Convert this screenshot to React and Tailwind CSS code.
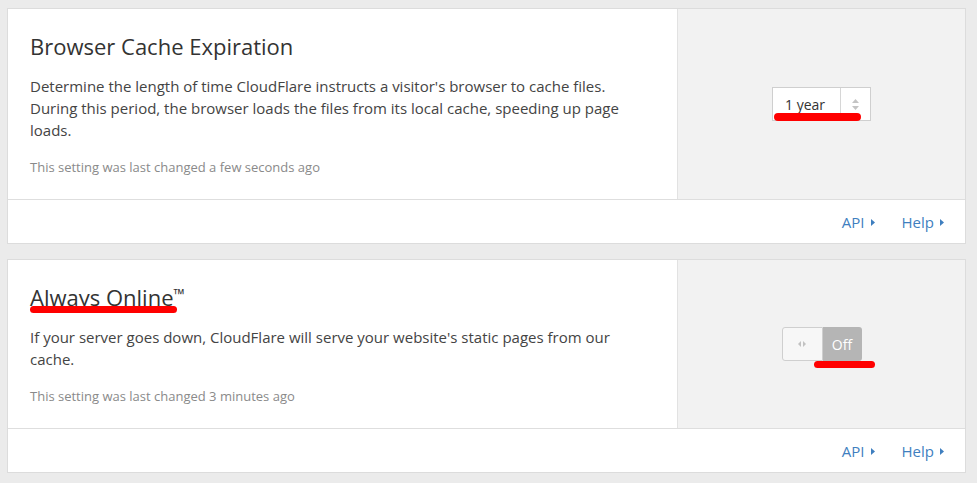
import React from 'react';

const font = { fontFamily: '"Open Sans", "Liberation Sans", sans-serif' };

const Caret = () => (
    <svg width="5" height="7" viewBox="0 0 5 7" className="ml-[6px] inline-block">
        <path d="M0 0 L4 3.5 L0 7 Z" fill="#3f7fbf" />
    </svg>
);

const Footer = () => (
    <div className="h-[44px] border-t border-[#dedede] flex items-center justify-end pr-[20px] pt-[1px] text-[15px] text-[#3f7fbf]">
        <span className="flex items-center">API<Caret /></span>
        <span className="flex items-center ml-[26px]">Help<Caret /></span>
    </div>
);

const SettingCard = ({ title, children, changed, control }) => (
    <div className="w-[959px] border border-[#dcdcdc] bg-white">
        <div className="flex">
            <div className="flex-1 pl-[22px] pr-[20px] pt-[22px] pb-[23px]">
                {title}
                <p className="mt-[14px] max-w-[615px] text-[15px] leading-[22px] text-[#444]">{children}</p>
                <p className="mt-[17px] text-[13px] leading-[18px] text-[#8a8a8a]">{changed}</p>
            </div>
            <div className="w-[288px] bg-[#f2f2f2] border-l border-[#e2e2e2] flex items-center justify-center">
                {control}
            </div>
        </div>
        <Footer />
    </div>
);

const CacheSelect = () => (
    <div className="relative flex h-[34px] w-[99px] border border-[#cfcfcf] bg-white">
        <div className="flex-1 flex items-center pl-[12px] text-[14px] text-[#333]">1 year</div>
        <div className="w-[30px] border-l border-[#d6d6d6] flex flex-col items-center justify-center gap-[3px]">
            <svg width="7" height="4" viewBox="0 0 7 4"><path d="M0 4 L3.5 0 L7 4 Z" fill="#c4c4c4" /></svg>
            <svg width="7" height="4" viewBox="0 0 7 4"><path d="M0 0 L3.5 4 L7 0 Z" fill="#c4c4c4" /></svg>
        </div>
        <div className="absolute left-[1px] top-[25px] w-[87px] h-[8px] rounded-full bg-[#ff0000]" />
    </div>
);

const Toggle = () => (
    <div className="relative flex h-[34px] w-[80px] rounded-[3px]">
        <div className="w-[41px] bg-[#f7f7f7] border border-[#cfcfcf] rounded-l-[3px] flex items-center justify-center gap-[2px]">
            <svg width="3" height="6" viewBox="0 0 3 6"><path d="M3 0 L0 3 L3 6 Z" fill="#c2c2c2" /></svg>
            <svg width="3" height="6" viewBox="0 0 3 6"><path d="M0 0 L3 3 L0 6 Z" fill="#c2c2c2" /></svg>
        </div>
        <div className="flex-1 bg-[#b5b5b5] rounded-r-[3px] flex items-center justify-center text-[14px] text-white">Off</div>
        <div className="absolute left-[32px] top-[34px] w-[61px] h-[7px] rounded-full bg-[#ff0000]" />
    </div>
);

export default function App() {
    return (
        <div style={font} className="min-h-screen bg-[#ebebeb] pt-[8px] pl-[7px]">
            <SettingCard
                title={<h2 className="text-[22px] leading-[30px] text-[#333]">Browser Cache Expiration</h2>}
                changed="This setting was last changed a few seconds ago"
                control={<CacheSelect />}
            >
                Determine the length of time CloudFlare instructs a visitor's browser to cache files. During this period, the browser loads the files from its local cache, speeding up page loads.
            </SettingCard>
            <div className="h-[15px]" />
            <SettingCard
                title={
                    <h2 className="relative text-[22px] leading-[30px] text-[#333]">
                        Always Online<span className="text-[15px] leading-none align-[6px]">™</span>
                        <span className="absolute left-0 top-[24px] w-[147px] h-[7px] rounded-full bg-[#ff0000]" />
                    </h2>
                }
                changed="This setting was last changed 3 minutes ago"
                control={<Toggle />}
            >
                If your server goes down, CloudFlare will serve your website's static pages from our cache.
            </SettingCard>
        </div>
    );
}
